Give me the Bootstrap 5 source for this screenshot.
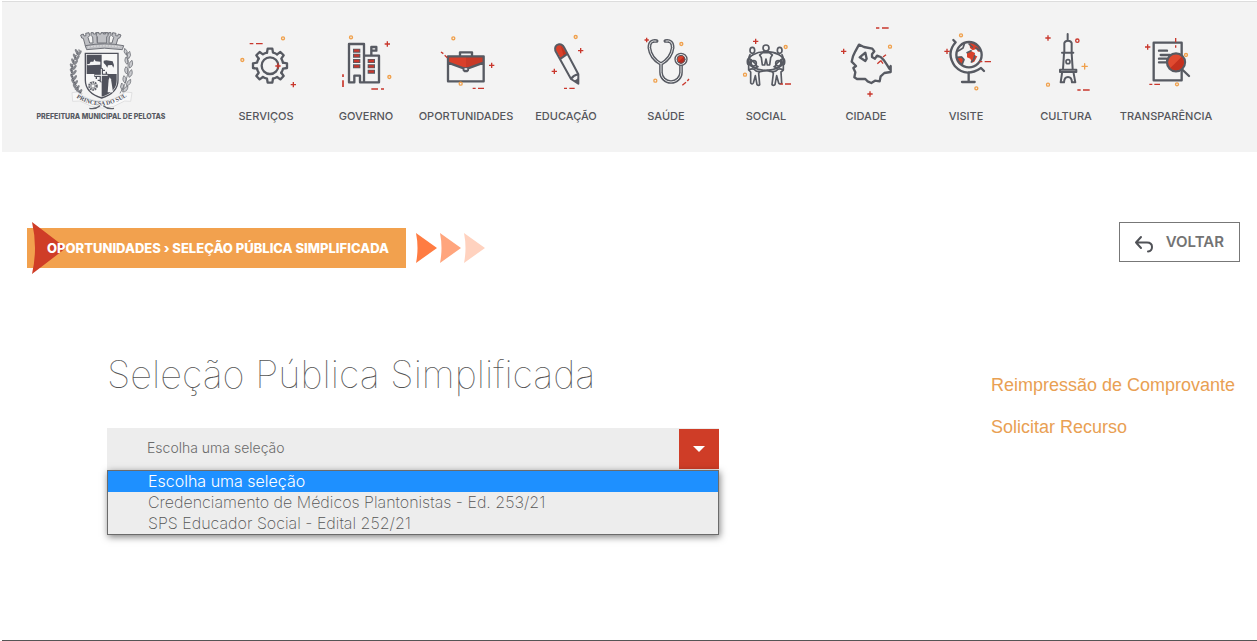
<!DOCTYPE html>
<html lang="pt-BR">
<head>
<meta charset="utf-8">
<meta name="viewport" content="width=device-width, initial-scale=1">
<title>Seleção Pública Simplificada</title>
<link rel="stylesheet" href="https://cdn.jsdelivr.net/npm/bootstrap@5.3.0/dist/css/bootstrap.min.css">
<style>
  :root { --ink: #575a62; --brick: #cf3d27; --sand: #f2a14e; }
  body { font-family: Inter, "Open Sans", sans-serif; color: #6b6b6b; background: #fff; }
  .site { padding: 1px 0 0 2px; }
  .topbar { background: #f3f3f3; border-top: 1px solid #ddd; padding: 22px 41px 28px 0; }
  .brand { flex: 0 0 198px; color: var(--ink); text-decoration: none; font: 800 7px/12px Inter, sans-serif; margin-right: 16px; padding-top: 1px; }
  .brand svg { width: 90px; height: 90px; margin-left: 8px; }
  .brand span { margin-top: -4px; }
  .mainmenu .nav-item { flex: 1 1 0; }
  .mainmenu a { color: #55565b; font-size: 11px; font-weight: 500; line-height: 16px; text-decoration: none; white-space: nowrap; }
  .mainmenu svg { width: 80px; height: 80px; margin-bottom: 4px; }
  .ic { fill: none; stroke: var(--ink); stroke-width: 7; stroke-linejoin: round; stroke-linecap: round; }
  .ic .r { stroke: #c9372c; stroke-width: 4; stroke-linecap: butt; }
  .ic .o { stroke: #f0a04b; stroke-width: 4; }
  .ic .f { fill: #d9402a; stroke: none; }
  .ic .d { fill: var(--ink); stroke: none; }
  .crumbs { padding: 70px 17px 0 25px; }
  .crumb-bar { background: var(--sand); height: 40px; padding: 0 17px 0 20px; margin-top: 6px; }
  .crumb-bar a { color: #fff; font-size: 13px; font-weight: 800; line-height: 40px; text-decoration: none; position: relative; }
  .crumb-flag { position: absolute; left: 5px; top: -6px; width: 34px; height: 52px; }
  .crumb-tail { width: 70px; height: 30px; margin: 11px 0 0 9px; }
  .back { border: 1px solid #777; border-radius: 0; background: #fff; color: #737373; height: 40px; padding: 0 15px 0 14px; font-size: 15px; font-weight: 600; }
  .back svg { width: 20px; height: 18px; margin: 4px 12px 0 0; }
  .body-row { padding: 84px 0 0 105px; }
  .picker { max-width: 612px; }
  .picker h1 { font-size: 38px; font-weight: 100; line-height: 44px; margin-bottom: 32px; color: #555; white-space: nowrap; }
  .choice { border: 0; border-radius: 0; background: #ededed; color: #6b6b6b; font-size: 14px; font-weight: 300; height: 42px; padding: 0 56px 3px 40px; appearance: none; }
  .choice-arrow { position: absolute; right: 0; top: 1px; width: 40px; height: 40px; background: var(--brick); pointer-events: none; }
  .choice-list { position: absolute; top: 42px; left: 0; right: 0; border: 1px solid #6b6b6b; background: #ededed; box-shadow: 1px 2px 7px rgba(0,0,0,.5); font-size: 16px; font-weight: 200; line-height: 21px; }
  .choice-list li { padding-left: 40px; color: #555; }
  .choice-list li.on { background: #1e90ff; color: #fff; font-weight: 300; }
  .aside { flex: 0 0 266px; padding-top: 22px; font: 18px/22px "Liberation Sans", Arial, sans-serif; }
  .aside a { color: #e9a053; text-decoration: none; margin-bottom: 20px; }
  .foot { border-top: 1px solid #555; }
</style>
</head>
<body>
<div class="site d-flex flex-column min-vh-100">
<svg class="d-none" aria-hidden="true">
  <defs>
    <path id="plus" d="M-8 0H8M0-8V8"/>
    <circle id="ring" r="4.5"/>
    <path id="tooth" d="M39-9L51-7V7L39 9A40 40 0 0 1 33.9 21.2"/>
    <g id="sprig" fill="#85878d">
      <ellipse rx="4" ry="9" transform="translate(0 0) rotate(-30)"/>
      <ellipse rx="4" ry="9" transform="translate(9 4) rotate(35)"/>
      <circle cx="3" cy="8" r="3"/>
    </g>
  </defs>
</svg>
<header class="topbar d-flex">
  <a class="brand d-flex flex-column align-items-center" href="#">
    <svg viewBox="0 0 270 270" aria-hidden="true">
      <g fill="#bfc0c4" stroke="#707279" stroke-width="3">
        <path d="M62 30l8-3 2 6 6-1-1-7 10-2 2 9-5 5 5 17h10l-1-18-5-5v-8h7v4h7v-4h8v8l-4 5 1 17h22l1-17-4-5v-8h8v4h7v-4h7v8l-5 5-1 18h9l5-17-5-5 2-9 10 2-1 7 6 1 2-6 8 3-4 9-5 1-8 26H77l-7-26-5-1z"/>
        <path d="M112 54V36l-3-5v-8h8v4h6v-4h7v4h7v-4h7v8l-4 5v18z"/>
        <path d="M76 62q58-11 115 0l-4 12q-54-9-107 0z"/>
      </g>
      <path d="M84 66q50-7 98 0" fill="none" stroke="#f3f3f3" stroke-width="2" stroke-dasharray="5 4"/>
      <g>
        <use href="#sprig" x="50" y="80"/><use href="#sprig" x="44" y="94"/><use href="#sprig" x="39" y="108"/><use href="#sprig" x="35" y="123"/><use href="#sprig" x="35" y="138"/><use href="#sprig" x="36" y="154"/><use href="#sprig" x="39" y="169"/><use href="#sprig" x="44" y="184"/><use href="#sprig" x="52" y="196"/>
        <path d="M58 74Q24 130 40 165T66 207" fill="none" stroke="#5b5d65" stroke-width="4" stroke-dasharray="3 3"/>
      </g>
      <g fill="#c9cace" stroke="#74767c" stroke-width="2.5">
        <path d="M194 70q-6 12 5 20 8-9-5-20zM209 79q-12 9-3 22 10-9 3-22zM198 96q-8 12 3 22 9-10-3-22zM216 106q-13 8-7 23 13-7 7-23zM198 125q-9 12 2 22 10-11-2-22zM215 134q-13 9-8 23 14-7 8-23zM192 152q-8 13 3 22 9-12-3-22zM212 163q-14 6-12 20 14-4 12-20zM185 174q-8 13 2 22 11-12-2-22zM204 184q-14 2-16 17 15 0 16-17z"/>
        <path d="M199 82Q217 150 180 205" fill="none"/>
      </g>
      <path d="M76 85H174V165Q174 204 125 219Q76 204 76 165z" fill="#f7f7f7" stroke="#50525c" stroke-width="4"/>
      <path d="M80 89h45v58H80zM125 147h45v20q0 33-45 48z" fill="#50525c"/>
      <path d="M81 117h7l4-7h8l3-7 4 6 14 1v9l-38 2z" fill="#f4f4f4"/>
      <path d="M131 107l8-1 19 3 4 12-2 7-4-8-12 1-2 7-5-8-6-6z" fill="#50525c"/>
      <g stroke="#50525c" stroke-width="10"><path d="M124 130v42M103 151h42"/><path d="M113 136h22M113 166h22M109 140v22M139 140v22" stroke-width="4"/></g>
      <g stroke="#f5f5f5" stroke-width="3"><path d="M124 132v38M105 151h38"/></g>
      <circle cx="99" cy="183" r="11" fill="none" stroke="#64666e" stroke-width="7" stroke-dasharray="5 2"/>
      <circle cx="99" cy="183" r="6" fill="none" stroke="#64666e" stroke-width="2"/>
      <path d="M146 164l3-7 4 6 6 39h-16z" fill="#f4f4f4"/>
      <path d="M36 203l16-2q70 55 145 0l19 2-4 26-18-1q-65 43-134 0l-22 1z" fill="#f8f8f8" stroke="#d4d5d7" stroke-width="2"/>
      <path id="motto" d="M49 217Q125 268 204 211" fill="none"/>
      <text font-family="Liberation Serif, serif" font-weight="700" font-size="18" fill="#50525c"><textPath href="#motto">PRINCESA DO SUL</textPath></text>
      <path d="M88 250q18 4 32-8M162 250q-18 4-32-8" fill="none" stroke="#5e6068" stroke-width="4"/>
    </svg>
    <span>PREFEITURA MUNICIPAL DE PELOTAS</span>
  </a>
  <nav class="flex-fill" aria-label="Principal">
    <ul class="mainmenu nav flex-nowrap">
      <li class="nav-item"><a href="#" class="d-flex flex-column align-items-center">
        <svg class="ic" viewBox="18 12 240 240" aria-hidden="true">
          <g transform="translate(150 137)"><use href="#tooth"/><use href="#tooth" transform="rotate(45)"/><use href="#tooth" transform="rotate(90)"/><use href="#tooth" transform="rotate(135)"/><use href="#tooth" transform="rotate(180)"/><use href="#tooth" transform="rotate(225)"/><use href="#tooth" transform="rotate(270)"/><use href="#tooth" transform="rotate(315)"/><circle r="25"/></g>
          <g class="r"><path d="M89 71h11M108 71h20"/><use href="#plus" x="174" y="138"/><use href="#plus" x="220" y="194"/></g>
          <g class="o"><use href="#ring" x="189" y="55"/><use href="#ring" x="67" y="120"/></g>
        </svg>SERVIÇOS</a></li>
      <li class="nav-item"><a href="#" class="d-flex flex-column align-items-center">
        <svg class="ic" viewBox="318 12 240 240" aria-hidden="true">
          <path d="M387 187V72h45v115M432 107h45v80H420v-20h-17v20H387M454 106V81h15v11h-13"/>
          <path d="M399 92h22M399 107h22M399 123h22M399 139h22M443 123h22M443 139h22M443 155h22" stroke-width="12" stroke-linecap="butt"/>
          <path class="r" d="M402 92h16M402 107h16M402 123h16M402 139h16M446 123h16M446 139h16M446 155h16" style="stroke-width:7"/>
          <g class="r"><use href="#plus" x="502" y="72"/><path d="M369 163v8M369 181v20M454 207h20M483 207h9" stroke-width="5"/></g>
          <g class="o"><use href="#ring" x="393" y="52"/><use href="#ring" x="508" y="171"/></g>
        </svg>GOVERNO</a></li>
      <li class="nav-item"><a href="#" class="d-flex flex-column align-items-center">
        <svg class="ic" viewBox="48 12 240 240" aria-hidden="true">
          <path class="f" d="M114 110h107v18l-53 19-54-19z"/><path d="M168 110h53v18l-53 19z" fill="#c93a27" stroke="none"/>
          <path d="M114 109h107v75H114zM114 128l47 17M221 128l-47 17M150 107V97h36v10"/>
          <path class="d" d="M158 142h19v10l-5 5h-9l-5-5z"/><path d="M165 147h5" stroke="#fff" stroke-width="4"/>
          <g class="r"><path d="M93 96l7 5M104 106l8 7M188 205h9M204 205h18"/><use href="#plus" x="245" y="136"/></g>
          <g class="o"><use href="#ring" x="130" y="55"/><use href="#ring" x="152" y="191"/></g>
        </svg>OPORTUNIDADES</a></li>
      <li class="nav-item"><a href="#" class="d-flex flex-column align-items-center">
        <svg class="ic" viewBox="348 12 240 240" aria-hidden="true">
          <path class="f" d="M435 87q2-15 15-14 8 1 11 8l9 20-18 15z"/><path d="M452 76l18 25-9 8z" fill="#c2351f" stroke="none"/>
          <path stroke-width="6" d="M436 92Q432 76 447 73Q457 72 462 82L505 163V191L483 177L436 92M452 116L469 104M484 176Q490 166 504 163"/><path class="d" d="M505 191l-13-8 12-8z"/>
          <g class="r"><use href="#plus" x="512" y="92"/><use href="#plus" x="433" y="154"/><path d="M462 205h9M478 205h16"/></g>
          <g class="o"><use href="#ring" x="497" y="51"/></g>
        </svg>EDUCAÇÃO</a></li>
      <li class="nav-item"><a href="#" class="d-flex flex-column align-items-center">
        <svg class="ic" viewBox="48 12 240 240" aria-hidden="true">
          <g stroke-width="11"><path d="M140 63Q118 59 118 83Q122 115 153 132Q184 115 188 83Q188 59 166 63M153 132V157A30 29 0 0 0 213 157V136"/></g>
          <g stroke="#e4e5e6" stroke-width="3"><path d="M138 63Q118 59 118 83Q122 115 153 132Q184 115 188 83Q188 59 168 63M153 132V157A30 29 0 0 0 213 157V136"/></g>
          <circle cx="213" cy="118" r="18" fill="#f3f3f3" stroke-width="4"/><circle class="f" cx="213" cy="118" r="12"/><path d="M204 127a12 12 0 0 0 17-17z" fill="#b82b20" stroke="none"/><circle cx="213" cy="118" r="12" stroke-width="3"/>
          <g class="r"><use href="#plus" x="110" y="60" stroke-width="5" transform="translate(22 12) scale(.8)"/><path d="M217 196l11-9M232 183l5-6"/></g>
          <g class="o" stroke-width="3"><use href="#ring" x="214" y="72"/><use href="#ring" x="136" y="182"/></g>
        </svg>SAÚDE</a></li>
      <li class="nav-item"><a href="#" class="d-flex flex-column align-items-center">
        <svg class="ic" viewBox="348 12 240 240" aria-hidden="true">
          <g stroke-width="5">
            <ellipse cx="468" cy="123" rx="53" ry="28" stroke-width="5"/><circle cx="468" cy="84" r="9"/><ellipse cx="427" cy="91" rx="7" ry="9"/><ellipse cx="509" cy="91" rx="7" ry="9"/>
            <path d="M449 105l9-7h20l9 7-5 8-3 22h-7l-4-18-4 18h-7l-3-22z"/>
            <path d="M420 104q-10 20 4 31 9 13 20 5M516 104q10 20-4 31-9 13-20 5M423 119l14 13 5 9M513 119l-14 13-5 9"/>
            <path d="M416 134v16l6 6v33q5 6 8 0l6-22 5 27q5 4 8 0l-3-34q3-8 23-8 18 0 21 8l-4 34q4 4 9 0l5-27 6 22q4 6 9 0l-2-33 7-6v-16M417 150q12-7 20 2 9 5 27 0M519 150q-12-7-20 2-9 5-27 0"/>
            <ellipse cx="417" cy="125" rx="5" ry="9"/><ellipse cx="519" cy="125" rx="5" ry="9"/><circle cx="431" cy="130" r="8"/><circle cx="505" cy="130" r="8"/>
          </g>
          <g class="r"><use href="#plus" x="437" y="64"/><path d="M511 192h8M525 192h18"/></g>
          <g class="o"><use href="#ring" x="527" y="81"/><use href="#ring" x="405" y="164"/></g>
        </svg>SOCIAL</a></li>
      <li class="nav-item"><a href="#" class="d-flex flex-column align-items-center">
        <svg class="ic" viewBox="48 12 240 240" aria-hidden="true">
          <path d="M147 74L162 81 187 86 193 94 186 103V111L195 116 201 107 212 111 222 121 232 136 238 146 242 138V156L223 159 212 169 209 184 195 182 184 189 173 184 166 177H141L133 172 136 157 130 144 138 138 125 125 129 109 136 94z"/>
          <path d="M149 112l17-14 4 18-4 7z"/>
          <g class="r"><path d="M198 24h10M216 24h20M202 131l10-9M219 111l9-7M212 121l7 10"/><use href="#plus" x="101" y="94"/><use href="#plus" x="180" y="222"/></g>
          <g class="o"><use href="#ring" x="240" y="80"/></g>
        </svg>CIDADE</a></li>
      <li class="nav-item"><a href="#" class="d-flex flex-column align-items-center">
        <svg class="ic" viewBox="348 12 240 240" aria-hidden="true">
          <path class="f" d="M441 112l13-3 8 9-5 14-10 1-7-9zM478 70l12-3 16 11 7 16-9 1-5-8-11 4-8-7zM471 99l12-6 12 6-1 8 8 2-9 16-7 3-5-12-10-4z"/>
          <circle cx="477" cy="104" r="38"/><path d="M430 60l7 7Q407 100 435 139Q467 174 513 144l9 9"/><path d="M476 158V185M456 186h38"/>
          <path d="M443 94l16-10 5-15M440 112l15-1 7 8-6 15M477 72l10 9M471 98l12-6M484 126l7-7 3-12M498 84l14 10" stroke-width="5"/>
          <g class="r"><use href="#plus" x="411" y="94"/><path d="M508 125h9M524 125h19"/></g>
          <g class="o"><use href="#ring" x="453" y="46"/><use href="#ring" x="499" y="205"/></g>
        </svg>VISITE</a></li>
      <li class="nav-item"><a href="#" class="d-flex flex-column align-items-center">
        <svg class="ic" viewBox="48 12 240 240" aria-hidden="true">
          <path d="M173 42V61M163 97V69Q165 62 174 62T185 69V97M156 98h34M162 101L159 147M185 101L188 147M150 149h49v7h-49zM156 160L152 187H162Q163 171 174 171T186 187H196L191 160" stroke-width="6"/>
          <circle cx="174" cy="125" r="6" stroke-width="5"/>
          <g class="r"><use href="#plus" x="114" y="54"/><circle cx="202" cy="62" r="5"/><path d="M202 210h10M219 210h20"/></g>
          <g class="o"><use href="#plus" x="224" y="139"/><use href="#ring" x="114" y="194"/></g>
        </svg>CULTURA</a></li>
      <li class="nav-item"><a href="#" class="d-flex flex-column align-items-center">
        <svg class="ic" viewBox="348 12 240 240" aria-hidden="true">
          <path d="M431 68h84v113h-84z"/><path d="M447 92h24M452 105h28M447 116h22M447 127h21M515 147l22 21"/>
          <circle cx="498" cy="127" r="27" fill="#e04a30"/><path d="M481 144a24 24 0 0 0 34-34z" fill="#c5311f" stroke="none"/>
          <g class="r"><use href="#plus" x="413" y="81"/><path d="M497 54v13M497 76v7M418 193h9M433 193h17"/></g>
          <g class="o"><use href="#ring" x="528" y="105"/><use href="#ring" x="501" y="193"/></g>
        </svg>TRANSPARÊNCIA</a></li>
    </ul>
  </nav>
</header>

<main class="flex-fill">
  <div class="crumbs d-flex align-items-start">
    <div class="crumb-bar position-relative">
      <svg class="crumb-flag" viewBox="0 0 34 52" aria-hidden="true"><path d="M0 0L34 26 0 52Q6 26 0 0z" fill="#cf3d27"/></svg>
      <a href="#">OPORTUNIDADES › SELEÇÃO PÚBLICA SIMPLIFICADA</a>
    </div>
    <svg class="crumb-tail" viewBox="0 0 70 30" aria-hidden="true">
      <path d="M1 0L22 15 1 30Q4 15 1 0z" fill="#ff7c42"/><path d="M25 0L46 15 25 30Q28 15 25 0z" fill="#ffa57d"/><path d="M49 0L70 15 49 30Q52 15 49 0z" fill="#ffd2bf"/>
    </svg>
    <button type="button" class="back btn d-flex align-items-center ms-auto">
      <svg viewBox="0 0 20 18" fill="none" stroke="#505257" stroke-width="2" stroke-linecap="round" stroke-linejoin="round" aria-hidden="true"><path d="M7 2L2 7.500L7 13M2 7.500H13Q18 7.500 18 12Q18 16 14 16.500"/></svg>VOLTAR
    </button>
  </div>

  <div class="body-row d-flex justify-content-between">
    <div class="picker flex-fill">
      <h1><label for="selecao">Seleção Pública Simplificada</label></h1>
      <div class="position-relative">
        <select id="selecao" class="choice w-100 d-block">
          <option>Escolha uma seleção</option>
          <option>Credenciamento de Médicos Plantonistas - Ed. 253/21</option>
          <option>SPS Educador Social - Edital 252/21</option>
        </select>
        <span class="choice-arrow d-flex align-items-center justify-content-center"><svg width="12" height="6" viewBox="0 0 12 6" aria-hidden="true"><path d="M0 0h12L6 6z" fill="#fff"/></svg></span>
        <ul class="choice-list list-unstyled mb-0" role="listbox" aria-label="Seleções">
          <li class="on" role="option" aria-selected="true">Escolha uma seleção</li>
          <li role="option">Credenciamento de Médicos Plantonistas - Ed. 253/21</li>
          <li role="option">SPS Educador Social - Edital 252/21</li>
        </ul>
      </div>
    </div>
    <div class="aside d-flex flex-column align-items-start">
      <a href="#">Reimpressão de Comprovante</a>
      <a href="#">Solicitar Recurso</a>
    </div>
  </div>
</main>
<footer class="foot"></footer>
</div>
<script src="https://cdn.jsdelivr.net/npm/bootstrap@5.3.0/dist/js/bootstrap.bundle.min.js"></script>
</body>
</html>
